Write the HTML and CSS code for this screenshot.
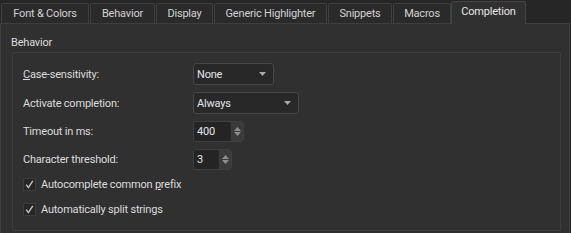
FILE: index.html
```html
<!DOCTYPE html>
<html>
<head>
<meta charset="utf-8">
<link rel="stylesheet" href="styles.css">
</head>
<body>
<div class="window">
  <div class="tabs">
    <div class="tab tab-font">Font &amp; Colors</div>
    <div class="tab tab-behavior">Behavior</div>
    <div class="tab tab-display">Display</div>
    <div class="tab tab-generic">Generic Highlighter</div>
    <div class="tab tab-snippets">Snippets</div>
    <div class="tab tab-macros">Macros</div>
    <div class="tab tab-completion active">Completion</div>
  </div>
  <div class="panel">
    <div class="group-title">Behavior</div>
    <div class="group">
      <div class="form">
        <div class="label"><u>C</u>ase-sensitivity:</div>
        <div class="combo combo-short"><span class="value">None</span><svg class="arrow" width="7" height="4" viewBox="0 0 7 4"><polygon points="0,0 7,0 3.5,4"/></svg></div>
        <div class="label">Activate completion:</div>
        <div class="combo combo-long"><span class="value">Always</span><svg class="arrow" width="7" height="4" viewBox="0 0 7 4"><polygon points="0,0 7,0 3.5,4"/></svg></div>
        <div class="label">Timeout in ms:</div>
        <div class="spin spin-wide"><span class="value">400</span><span class="spin-btns"><svg width="7" height="4" viewBox="0 0 7 4"><polygon points="0,4 7,4 3.5,0"/></svg><svg width="7" height="4" viewBox="0 0 7 4"><polygon points="0,0 7,0 3.5,4"/></svg></span></div>
        <div class="label">Character threshold:</div>
        <div class="spin spin-narrow"><span class="value">3</span><span class="spin-btns"><svg width="7" height="4" viewBox="0 0 7 4"><polygon points="0,4 7,4 3.5,0"/></svg><svg width="7" height="4" viewBox="0 0 7 4"><polygon points="0,0 7,0 3.5,4"/></svg></span></div>
      </div>
      <div class="checks">
        <div class="check"><span class="box"><svg width="11" height="11" viewBox="0 0 11 11"><path d="M2.2 5.6 L4.4 8.6 L8.8 1.8"/></svg></span><span>Autocomplete common <u>p</u>refix</span></div>
        <div class="check"><span class="box"><svg width="11" height="11" viewBox="0 0 11 11"><path d="M2.2 5.6 L4.4 8.6 L8.8 1.8"/></svg></span><span>Automatically split strings</span></div>
      </div>
    </div>
  </div>
</div>
</body>
</html>
```

FILE: styles.css
```css
html, body {
  margin: 0;
  padding: 0;
  background: #262626;
  overflow: hidden;
}

.window {
  width: 571px;
  height: 233px;
  font-family: Roboto, "Liberation Sans", sans-serif;
  font-size: 11px;
  letter-spacing: -0.2px;
  color: #dcdcdc;
  display: flex;
  flex-direction: column;
  overflow: hidden;
}

u {
  text-decoration: underline;
  text-underline-offset: 1px;
}

.tabs {
  flex: none;
  display: flex;
  align-items: flex-end;
  height: 23px;
  padding-left: 1px;
  gap: 1px;
}

.tab {
  box-sizing: border-box;
  height: 20px;
  display: flex;
  justify-content: center;
  line-height: 19px;
  background: #2a2a2a;
  border: 1px solid #3f3f3f;
  border-bottom: none;
  border-radius: 2px 2px 0 0;
  color: #d2d2d2;
  white-space: nowrap;
}

.tab-font { width: 88px; }
.tab-behavior { width: 65px; }
.tab-display { width: 57px; }
.tab-generic { width: 113px; }
.tab-snippets { width: 64px; }
.tab-macros { width: 58px; }
.tab-completion { width: 75px; margin-left: -1px; }

.tab.active {
  position: relative;
  z-index: 1;
  height: 23px;
  margin-bottom: -1px;
  line-height: 20px;
  background: #303030;
  border-color: #444444;
  color: #e6e6e6;
}

.panel {
  flex: 1;
  min-height: 0;
  margin-right: 1px;
  background: #303030;
  border: 1px solid #3e3e3e;
  border-bottom: none;
  padding: 11px 8px 0 11px;
}

.group-title {
  line-height: 15px;
  color: #dcdcdc;
  margin-left: -1px;
  margin-bottom: 2px;
}

.group {
  border: 1px solid #3c3c3c;
  border-radius: 1px;
  padding: 10px 10px 12px 10px;
}

.form {
  display: grid;
  grid-template-columns: 170px max-content;
  grid-template-rows: 22px 22px 21px 21px;
  row-gap: 7px;
  align-items: center;
}

.label {
  color: #dcdcdc;
  white-space: nowrap;
}

.combo {
  box-sizing: border-box;
  height: 22px;
  display: flex;
  align-items: center;
  justify-content: space-between;
  padding: 0 7px 0 3px;
  background: #282828;
  border: 1px solid #474747;
  border-radius: 3px;
  color: #e4e4ea;
}

.combo-short { width: 81px; }
.combo-long { width: 106px; }

.arrow polygon {
  fill: #a8a8a8;
}

.spin {
  box-sizing: border-box;
  height: 21px;
  display: flex;
  align-items: stretch;
  background: #242424;
  border: 1px solid #3f3f3f;
  border-radius: 3px;
  color: #e4e4ea;
}

.spin-wide { width: 51px; }
.spin-narrow { width: 39px; }

.spin .value {
  flex: 1;
  display: flex;
  align-items: center;
  padding-left: 3px;
}

.spin-btns {
  width: 12px;
  display: flex;
  flex-direction: column;
  align-items: center;
  justify-content: center;
  gap: 1px;
  background: #3b3b3b;
  border-left: 1px solid #2a2a2a;
  border-radius: 0 2px 2px 0;
}

.spin-btns polygon {
  fill: #8e8e8e;
}

.checks {
  display: flex;
  flex-direction: column;
  gap: 8px;
  margin-top: 6px;
}

.check {
  height: 17px;
  display: flex;
  align-items: center;
  gap: 5px;
  color: #dcdcdc;
}

.box {
  box-sizing: border-box;
  width: 13px;
  height: 13px;
  display: flex;
  align-items: center;
  justify-content: center;
  background: #262626;
  border: 1px solid #3c3c3c;
}

.box path {
  fill: none;
  stroke: #c4c4c4;
  stroke-width: 1.4;
}
```
